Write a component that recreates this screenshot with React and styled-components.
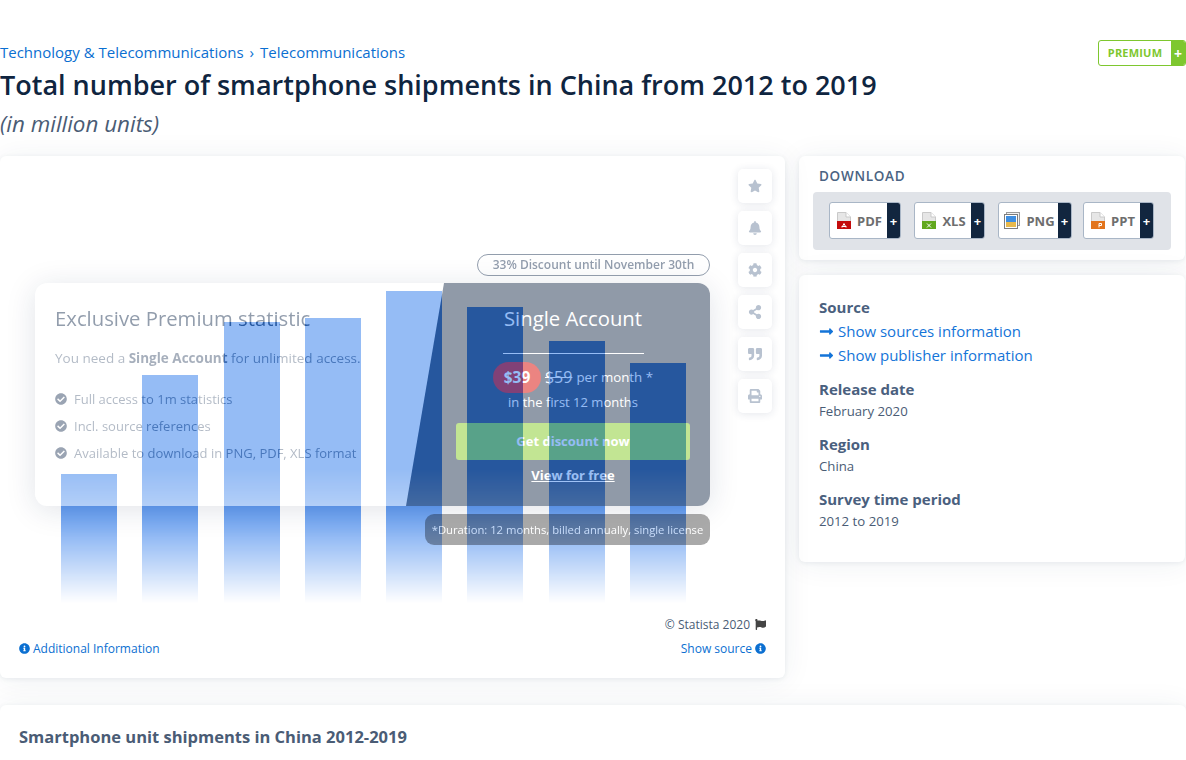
import React from "react";
import styled, { createGlobalStyle } from "styled-components";
import {
  FaStar,
  FaBell,
  FaCog,
  FaShareAlt,
  FaQuoteRight,
  FaPrint,
  FaCheckCircle,
  FaInfoCircle,
  FaFlag,
  FaLongArrowAltRight,
} from "react-icons/fa";

const GlobalStyle = createGlobalStyle`
  html, body {
    margin: 0;
    padding: 0;
    background: #fff;
    overflow: hidden;
  }
  body {
    font-family: "Open Sans", "Liberation Sans", sans-serif;
    color: #4a5c75;
  }
  * { box-sizing: border-box; }
`;

const Page = styled.div`
  width: 1186px;
  height: 760px;
  padding-top: 40px;
  overflow: hidden;
`;

const Header = styled.header`
  height: 116px;
`;

const TopRow = styled.div`
  display: flex;
  justify-content: space-between;
  align-items: flex-start;
  height: 26px;
`;

const Breadcrumb = styled.nav`
  display: flex;
  gap: 6px;
  padding-top: 2px;
  font-size: 15px;
  line-height: 21px;
  color: #0b6fd1;
`;

const Premium = styled.div`
  display: flex;
  width: 88px;
  height: 26px;
  border: 1px solid #7ec72f;
  border-radius: 3px;
  overflow: hidden;
  font-size: 11px;
  font-weight: 700;
  letter-spacing: 0.2px;
  color: #7ec72f;
`;

const PremiumLabel = styled.span`
  flex: 1;
  display: flex;
  align-items: center;
  justify-content: center;
  padding-bottom: 1px;
`;

const PremiumPlus = styled.span`
  width: 14px;
  display: flex;
  align-items: center;
  justify-content: center;
  background: #7ec72f;
  color: #fff;
  font-size: 14px;
`;

const Title = styled.h1`
  margin: 0;
  font-size: 27px;
  line-height: 38px;
  font-weight: 600;
  color: #0f2540;
`;

const Subtitle = styled.div`
  margin-top: 1px;
  font-size: 22.4px;
  line-height: 38px;
  font-style: italic;
  color: #4a5c75;
`;

const Columns = styled.div`
  display: grid;
  grid-template-columns: 785px 386px;
  gap: 14px;
  height: 522px;
`;

const Card = styled.section`
  background: #fff;
  border-radius: 6px;
  box-shadow: 0 1px 5px rgba(30, 50, 90, 0.08), 0 2px 30px rgba(30, 50, 90, 0.07);
`;

const ChartCard = styled(Card)`
  position: relative;
  height: 522px;
  padding-top: 135px;
`;

const Chart = styled.div`
  display: flex;
  align-items: flex-end;
  gap: 25.25px;
  height: 312px;
  padding-left: 61px;
  filter: blur(0.3px);
  -webkit-mask-image: linear-gradient(to bottom, #000 57%, transparent 100%);
  mask-image: linear-gradient(to bottom, #000 57%, transparent 100%);
`;

const Bar = styled.div`
  width: 56px;
  background: #2474ea;
  flex: none;
`;

const Toolbar = styled.div`
  position: absolute;
  top: 13px;
  left: 738px;
  display: flex;
  flex-direction: column;
  gap: 8px;
`;

const ToolButton = styled.button`
  width: 34px;
  height: 34px;
  padding: 0;
  display: flex;
  align-items: center;
  justify-content: center;
  border: 0;
  border-radius: 5px;
  background: #fff;
  box-shadow: 0 1px 8px rgba(30, 50, 90, 0.12);
  color: #b8c2d0;
  font-size: 14px;
`;

const Overlay = styled.div`
  position: absolute;
  top: 98px;
  left: 35px;
  width: 675px;
  display: flex;
  flex-direction: column;
  align-items: flex-end;
  opacity: 0.52;
  filter: blur(0.3px);
`;

const DiscountPill = styled.div`
  width: 233px;
  height: 22px;
  margin-bottom: 7px;
  padding-bottom: 2px;
  display: flex;
  align-items: center;
  justify-content: center;
  border: 1px solid #2d4260;
  border-radius: 11px;
  background: #fff;
  font-size: 12px;
  font-weight: 600;
  color: #2d4260;
`;

const Offer = styled.div`
  width: 675px;
  height: 223px;
  display: grid;
  grid-template-columns: 371px 304px;
  border-radius: 12px;
  background: #fff;
  overflow: hidden;
  box-shadow: 0 4px 30px rgba(20, 40, 80, 0.25);
`;

const OfferInfo = styled.div`
  padding: 22px 0 0 20px;
  color: #2d4260;
`;

const OfferTitle = styled.div`
  font-size: 20.3px;
  line-height: 26px;
`;

const OfferText = styled.p`
  margin: 17px 0 17px;
  font-size: 13.5px;
  line-height: 20px;
  white-space: nowrap;
  color: #6d7c92;
  b {
    color: #55667f;
  }
`;

const FeatureList = styled.ul`
  margin: 0;
  padding: 0;
  list-style: none;
`;

const Feature = styled.li`
  display: flex;
  align-items: center;
  gap: 7px;
  height: 27px;
  font-size: 13px;
  white-space: nowrap;
  color: #6d7c92;
  svg {
    flex: none;
    font-size: 12px;
    color: #3d4f6c;
  }
`;

const OfferBuy = styled.div`
  display: flex;
  flex-direction: column;
  align-items: center;
  padding: 22px 20px 0 50px;
  background: #2a3c58;
  clip-path: polygon(38px 0, 100% 0, 100% 100%, 0 100%);
  color: #fff;
`;

const BuyTitle = styled.div`
  font-size: 20.3px;
  line-height: 26px;
`;

const BuyRule = styled.hr`
  width: 141px;
  margin: 22px 0 7px;
  border: 0;
  border-top: 1px solid #fff;
`;

const PriceRow = styled.div`
  display: flex;
  align-items: center;
  gap: 4px;
  height: 32px;
  font-size: 13.3px;
`;

const PriceNow = styled.span`
  width: 48px;
  height: 31px;
  display: flex;
  align-items: center;
  justify-content: center;
  border-radius: 16px;
  background: #d8120c;
  font-size: 15.5px;
  font-weight: 700;
`;

const PriceOld = styled.s`
  font-size: 16px;
`;

const PriceNote = styled.div`
  font-size: 13px;
  line-height: 18px;
`;

const BuyButton = styled.button`
  width: 234px;
  height: 37px;
  margin: 12px 0 5px;
  padding: 0 0 2px;
  border: 0;
  border-radius: 3px;
  background: #8acd30;
  color: #fff;
  font: 700 13px "Open Sans", sans-serif;
`;

const FreeLink = styled.a`
  font-size: 13px;
  line-height: 20px;
  font-weight: 700;
  color: #fff;
  text-decoration: underline;
`;

const DurationPill = styled.div`
  width: 285px;
  height: 31px;
  margin-top: 8px;
  display: flex;
  align-items: center;
  justify-content: center;
  border-radius: 9px;
  background: rgba(0, 0, 0, 0.65);
  font-size: 11.25px;
  white-space: nowrap;
  color: #fff;
`;

const ChartFooter = styled.div`
  position: relative;
  padding: 12px 19px 0;
  font-size: 12px;
`;

const Copyright = styled.div`
  display: flex;
  justify-content: flex-end;
  align-items: center;
  gap: 5px;
  height: 18px;
  color: #4a5c75;
  svg {
    font-size: 11px;
    color: #444;
  }
`;

const FooterLinks = styled.div`
  display: flex;
  justify-content: space-between;
  margin-top: 7px;
  line-height: 17px;
  color: #0b6fd1;
`;

const FooterLink = styled.a`
  display: flex;
  align-items: center;
  gap: 3px;
  svg {
    font-size: 11px;
  }
`;

const Side = styled.div`
  display: flex;
  flex-direction: column;
  gap: 15px;
  align-items: stretch;
`;

const DownloadCard = styled(Card)`
  height: 104px;
  padding: 11px 14px 0;
`;

const DownloadTitle = styled.div`
  padding-left: 6px;
  font-size: 13.5px;
  line-height: 19px;
  font-weight: 600;
  letter-spacing: 0.7px;
  color: #4a6382;
`;

const DownloadBox = styled.div`
  display: flex;
  gap: 13px;
  height: 58px;
  margin-top: 6px;
  padding: 10px 0 0 16px;
  border-radius: 4px;
  background: #e0e3e8;
`;

const FileButton = styled.button`
  width: ${(p) => p.$w}px;
  height: 37px;
  margin-right: ${(p) => p.$pull || 0}px;
  padding: 0;
  display: flex;
  border: 1px solid #a9b6c6;
  border-radius: 3px;
  background: #fff;
  overflow: hidden;
`;

const FileLabel = styled.span`
  flex: 1;
  display: flex;
  align-items: center;
  justify-content: center;
  gap: 6px;
  height: 100%;
  padding-left: 2px;
  font: 700 13px "Open Sans", sans-serif;
  color: #6e6e6e;
`;

const FilePlus = styled.span`
  width: 13px;
  height: 100%;
  display: flex;
  align-items: center;
  justify-content: center;
  background: #12263f;
  font: 700 13px "Open Sans", sans-serif;
  color: #fff;
`;

const InfoCard = styled(Card)`
  height: 287px;
  padding: 22px 20px 0;
`;

const InfoHead = styled.div`
  padding-bottom: 2px;
  font-size: 15px;
  line-height: 20px;
  font-weight: 700;
  color: #4a607e;
  margin-top: ${(p) => p.$top || 0}px;
`;

const InfoValue = styled.div`
  margin-top: 1px;
  font-size: 13.2px;
  line-height: 18px;
  color: #4a5c75;
`;

const InfoLink = styled.a`
  display: flex;
  align-items: center;
  gap: 4px;
  height: 24px;
  font-size: 15px;
  color: #1474d8;
  svg {
    font-size: 15px;
  }
`;

const BottomCard = styled(Card)`
  margin-top: 27px;
  height: 80px;
  padding: 20px 19px;
  border-radius: 6px 6px 0 0;
`;

const BottomTitle = styled.h2`
  margin: 0;
  font-size: 16.5px;
  line-height: 24px;
  font-weight: 700;
  color: #4a5c75;
`;

const barTops = [474, 375, 322, 318, 291, 307, 341, 363];
const chartBottom = 603;

const tools = [FaStar, FaBell, FaCog, FaShareAlt, FaQuoteRight, FaPrint];

const features = [
  "Full access to 1m statistics",
  "Incl. source references",
  "Available to download in PNG, PDF, XLS format",
];

const FileIcon = ({ color, mark }) => (
  <svg width="14" height="17" viewBox="0 0 14 17">
    <path d="M0.5 0.5H9L13.5 5V16.5H0.5Z" fill="#e6e6e6" stroke="#c9c9c9" />
    <path d="M9 0.5V5H13.5" fill="#fff" stroke="#c9c9c9" />
    <rect x="0" y="9" width="14" height="8" fill={color} />
    <path d={mark} fill="none" stroke="#fff" strokeWidth="1" />
  </svg>
);

const ImageIcon = () => (
  <svg width="16" height="17" viewBox="0 0 16 17">
    <rect x="2.5" y="0.5" width="13" height="13" fill="#f2f2f2" stroke="#9a9a9a" />
    <rect x="0.5" y="2.5" width="13" height="14" fill="#fff" stroke="#7d7d7d" />
    <rect x="2" y="4" width="10" height="6" fill="#3f8ee0" />
    <rect x="2" y="10" width="10" height="5" fill="#e8b94c" />
  </svg>
);

const files = [
  { label: "PDF", w: 72, icon: <FileIcon color="#c40c0c" mark="M5 15.5L7 11.5L9 15.5M4.5 14.5H9.5" /> },
  { label: "XLS", w: 71, icon: <FileIcon color="#62a81e" mark="M5 11.5L9 15.5M9 11.5L5 15.5" /> },
  { label: "PNG", w: 74, pull: -2, icon: <ImageIcon /> },
  { label: "PPT", w: 71, icon: <FileIcon color="#e2741c" mark="M8 15.5V11.5H10.5V13.5H8" /> },
];

const App = () => (
  <Page>
    <GlobalStyle />
    <Header>
      <TopRow>
        <Breadcrumb>
          <span>Technology &amp; Telecommunications</span>
          <span>›</span>
          <span>Telecommunications</span>
        </Breadcrumb>
        <Premium>
          <PremiumLabel>PREMIUM</PremiumLabel>
          <PremiumPlus>+</PremiumPlus>
        </Premium>
      </TopRow>
      <Title>Total number of smartphone shipments in China from 2012 to 2019</Title>
      <Subtitle>(in million units)</Subtitle>
    </Header>

    <Columns>
      <ChartCard>
        <Chart>
          {barTops.map((top) => (
            <Bar key={top} style={{ height: chartBottom - top }} />
          ))}
        </Chart>

        <Toolbar>
          {tools.map((Icon, i) => (
            <ToolButton key={i}>
              <Icon />
            </ToolButton>
          ))}
        </Toolbar>

        <Overlay>
          <DiscountPill>33% Discount until November 30th</DiscountPill>
          <Offer>
            <OfferInfo>
              <OfferTitle>Exclusive Premium statistic</OfferTitle>
              <OfferText>
                You need a <b>Single Account</b> for unlimited access.
              </OfferText>
              <FeatureList>
                {features.map((f) => (
                  <Feature key={f}>
                    <FaCheckCircle />
                    {f}
                  </Feature>
                ))}
              </FeatureList>
            </OfferInfo>
            <OfferBuy>
              <BuyTitle>Single Account</BuyTitle>
              <BuyRule />
              <PriceRow>
                <PriceNow>$39</PriceNow>
                <PriceOld>$59</PriceOld>
                <span>per month *</span>
              </PriceRow>
              <PriceNote>in the first 12 months</PriceNote>
              <BuyButton>Get discount now</BuyButton>
              <FreeLink>View for free</FreeLink>
            </OfferBuy>
          </Offer>
          <DurationPill>*Duration: 12 months, billed annually, single license</DurationPill>
        </Overlay>

        <ChartFooter>
          <Copyright>
            © Statista 2020 <FaFlag />
          </Copyright>
          <FooterLinks>
            <FooterLink>
              <FaInfoCircle /> Additional Information
            </FooterLink>
            <FooterLink>
              Show source <FaInfoCircle />
            </FooterLink>
          </FooterLinks>
        </ChartFooter>
      </ChartCard>

      <Side>
        <DownloadCard>
          <DownloadTitle>DOWNLOAD</DownloadTitle>
          <DownloadBox>
            {files.map((f) => (
              <FileButton key={f.label} $w={f.w} $pull={f.pull}>
                <FileLabel>
                  {f.icon}
                  {f.label}
                </FileLabel>
                <FilePlus>+</FilePlus>
              </FileButton>
            ))}
          </DownloadBox>
        </DownloadCard>
        <InfoCard>
          <InfoHead>Source</InfoHead>
          <InfoLink>
            <FaLongArrowAltRight /> Show sources information
          </InfoLink>
          <InfoLink>
            <FaLongArrowAltRight /> Show publisher information
          </InfoLink>
          <InfoHead $top={12}>Release date</InfoHead>
          <InfoValue>February 2020</InfoValue>
          <InfoHead $top={14}>Region</InfoHead>
          <InfoValue>China</InfoValue>
          <InfoHead $top={14}>Survey time period</InfoHead>
          <InfoValue>2012 to 2019</InfoValue>
        </InfoCard>
      </Side>
    </Columns>

    <BottomCard>
      <BottomTitle>Smartphone unit shipments in China 2012-2019</BottomTitle>
    </BottomCard>
  </Page>
);

export default App;
